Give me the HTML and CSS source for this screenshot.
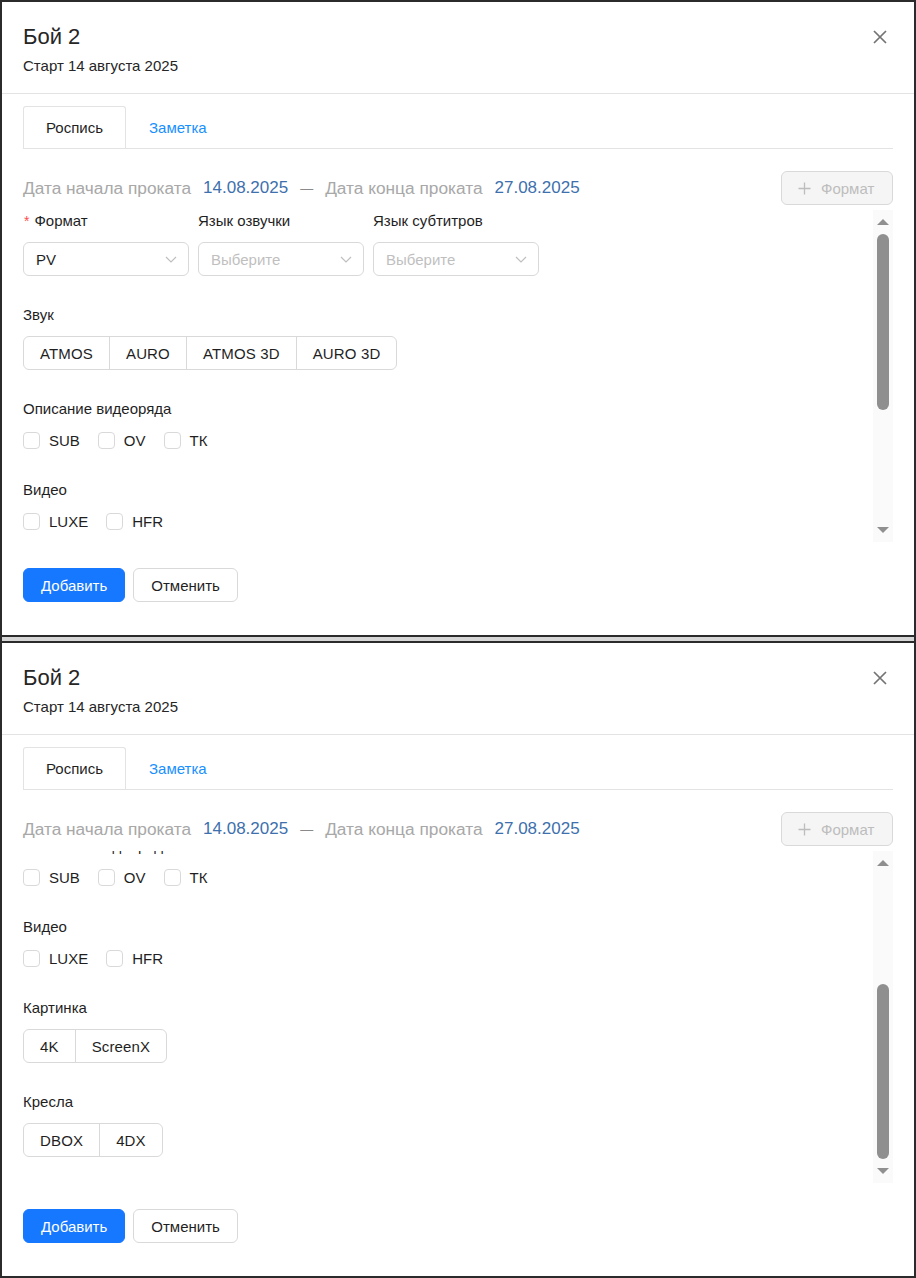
FILE: index.html
```html
<!DOCTYPE html>
<html lang="ru">
<head>
<meta charset="utf-8">
<title>Бой 2</title>
<link rel="stylesheet" href="styles.css">
</head>
<body>
<div class="screen">

  <section class="modal">
    <header class="modal-head">
      <div class="titles">
        <h1 class="title">Бой 2</h1>
        <p class="subtitle">Старт 14 августа 2025</p>
      </div>
      <button class="close" aria-label="Закрыть">
        <svg width="14" height="14" viewBox="0 0 14 14"><path d="M1 1L13 13M13 1L1 13" stroke="#737373" stroke-width="1.7" fill="none"/></svg>
      </button>
    </header>
    <div class="modal-body">
      <div class="tabs">
        <div class="tab active">Роспись</div>
        <div class="tab">Заметка</div>
      </div>
      <div class="dates">
        <span class="d-label">Дата начала проката</span>
        <span class="d-val">14.08.2025</span>
        <span class="dash">—</span>
        <span class="d-label">Дата конца проката</span>
        <span class="d-val">27.08.2025</span>
        <button class="add-format" disabled>
          <svg width="13" height="13" viewBox="0 0 13 13"><path d="M6.5 0.5V12.5M0.5 6.5H12.5" stroke="#bdbdbd" stroke-width="1.3" fill="none"/></svg>
          <span>Формат</span>
        </button>
      </div>
      <div class="scroll">
        <div class="viewport">
          <div class="content">
            <div class="selects">
              <div class="field">
                <div class="label"><span class="req">*</span>Формат</div>
                <div class="select"><span class="val">PV</span><svg class="chev" width="12" height="7" viewBox="0 0 12 7"><path d="M1 1L6 6L11 1" stroke="#bfbfbf" stroke-width="1.2" fill="none"/></svg></div>
              </div>
              <div class="field">
                <div class="label">Язык озвучки</div>
                <div class="select"><span class="ph">Выберите</span><svg class="chev" width="12" height="7" viewBox="0 0 12 7"><path d="M1 1L6 6L11 1" stroke="#bfbfbf" stroke-width="1.2" fill="none"/></svg></div>
              </div>
              <div class="field">
                <div class="label">Язык субтитров</div>
                <div class="select"><span class="ph">Выберите</span><svg class="chev" width="12" height="7" viewBox="0 0 12 7"><path d="M1 1L6 6L11 1" stroke="#bfbfbf" stroke-width="1.2" fill="none"/></svg></div>
              </div>
            </div>
            <div class="item">
              <div class="label">Звук</div>
              <div class="group"><span class="gbtn">ATMOS</span><span class="gbtn">AURO</span><span class="gbtn">ATMOS 3D</span><span class="gbtn">AURO 3D</span></div>
            </div>
            <div class="item">
              <div class="label">Описание видеоряда</div>
              <div class="checks"><label class="check"><span class="box"></span>SUB</label><label class="check"><span class="box"></span>OV</label><label class="check"><span class="box"></span>ТК</label></div>
            </div>
            <div class="item">
              <div class="label">Видео</div>
              <div class="checks"><label class="check"><span class="box"></span>LUXE</label><label class="check"><span class="box"></span>HFR</label></div>
            </div>
          </div>
        </div>
        <div class="scrollbar">
          <div class="sb-btn"><span class="tri up"></span></div>
          <div class="sb-track"><div class="thumb" style="margin-top:0px;height:176px"></div></div>
          <div class="sb-btn"><span class="tri down"></span></div>
        </div>
      </div>
      <div class="footer">
        <button class="btn primary">Добавить</button>
        <button class="btn">Отменить</button>
      </div>
    </div>
  </section>

  <div class="sep"></div>

  <section class="modal">
    <header class="modal-head">
      <div class="titles">
        <h1 class="title">Бой 2</h1>
        <p class="subtitle">Старт 14 августа 2025</p>
      </div>
      <button class="close" aria-label="Закрыть">
        <svg width="14" height="14" viewBox="0 0 14 14"><path d="M1 1L13 13M13 1L1 13" stroke="#737373" stroke-width="1.7" fill="none"/></svg>
      </button>
    </header>
    <div class="modal-body">
      <div class="tabs">
        <div class="tab active">Роспись</div>
        <div class="tab">Заметка</div>
      </div>
      <div class="dates">
        <span class="d-label">Дата начала проката</span>
        <span class="d-val">14.08.2025</span>
        <span class="dash">—</span>
        <span class="d-label">Дата конца проката</span>
        <span class="d-val">27.08.2025</span>
        <button class="add-format" disabled>
          <svg width="13" height="13" viewBox="0 0 13 13"><path d="M6.5 0.5V12.5M0.5 6.5H12.5" stroke="#bdbdbd" stroke-width="1.3" fill="none"/></svg>
          <span>Формат</span>
        </button>
      </div>
      <div class="scroll">
        <div class="viewport">
          <div class="content scrolled">
            <div class="item">
              <div class="label">Описание видеоряда</div>
              <div class="checks"><label class="check"><span class="box"></span>SUB</label><label class="check"><span class="box"></span>OV</label><label class="check"><span class="box"></span>ТК</label></div>
            </div>
            <div class="item">
              <div class="label">Видео</div>
              <div class="checks"><label class="check"><span class="box"></span>LUXE</label><label class="check"><span class="box"></span>HFR</label></div>
            </div>
            <div class="item">
              <div class="label">Картинка</div>
              <div class="group"><span class="gbtn">4K</span><span class="gbtn">ScreenX</span></div>
            </div>
            <div class="item">
              <div class="label">Кресла</div>
              <div class="group"><span class="gbtn">DBOX</span><span class="gbtn">4DX</span></div>
            </div>
          </div>
        </div>
        <div class="scrollbar">
          <div class="sb-btn"><span class="tri up"></span></div>
          <div class="sb-track"><div class="thumb" style="margin-top:109px;height:175px"></div></div>
          <div class="sb-btn"><span class="tri down"></span></div>
        </div>
      </div>
      <div class="footer">
        <button class="btn primary">Добавить</button>
        <button class="btn">Отменить</button>
      </div>
    </div>
  </section>

</div>
</body>
</html>
```
FILE: styles.css
```css
* { box-sizing: border-box; }
html, body { margin: 0; padding: 0; }
body {
  background: #2b2b2b;
  font-family: "Liberation Sans", Arial, sans-serif;
  font-size: 15px;
  color: #1f1f1f;
}
.screen {
  padding: 2px 2px 2px 2px;
  width: 916px;
}
.modal {
  background: #fff;
  height: 633px;
  width: 912px;
}
.sep {
  height: 8px;
  border-top: 2px solid #2b2b2b;
  border-bottom: 2px solid #2b2b2b;
  background: #d6d6d6;
}
.modal-head {
  display: flex;
  justify-content: space-between;
  align-items: flex-start;
  padding: 21px 21px 16px 21px;
  border-bottom: 1px solid #e3e3e3;
}
.title {
  margin: 0;
  font-size: 22px;
  font-weight: 400;
  line-height: 28px;
  color: #262626;
}
.subtitle {
  margin: 4px 0 0 0;
  font-size: 15px;
  line-height: 22px;
  color: #262626;
}
.close {
  width: 26px;
  height: 26px;
  margin-top: 1px;
  padding: 0;
  border: 0;
  background: transparent;
  display: flex;
  align-items: center;
  justify-content: center;
}
.modal-body {
  padding: 12px 21px 0 21px;
}
.tabs {
  display: flex;
  border-bottom: 1px solid #e3e3e3;
  height: 43px;
}
.tab {
  height: 42px;
  padding: 0 22px;
  display: flex;
  align-items: center;
  line-height: 22px;
  color: #1890ff;
  border: 1px solid transparent;
  border-bottom: 0;
}
.tab.active {
  color: #1f1f1f;
  border-color: #e3e3e3;
  border-radius: 3px 3px 0 0;
}
.dates {
  margin-top: 22px;
  height: 34px;
  display: flex;
  align-items: center;
  font-size: 17px;
}
.d-label { color: #a8a8a8; margin-right: 12px; font-size: 17.3px; }
.d-val { color: #3d70ad; margin-right: 12px; }
.dash { color: #8a8a8a; margin-right: 12px; font-size: 13px; }
.add-format {
  margin-left: auto;
  height: 34px;
  width: 112px;
  display: flex;
  align-items: center;
  gap: 10px;
  padding: 0 0 0 16px;
  background: #f5f5f5;
  border: 1px solid #d9d9d9;
  border-radius: 6px;
  color: #bdbdbd;
  font-family: inherit;
  font-size: 15px;
}
.scroll {
  margin-top: 5px;
  height: 332px;
  display: flex;
}
.viewport {
  flex: 1;
  overflow: hidden;
}
.content {
  padding-bottom: 26px;
}
.content.scrolled { margin-top: -44px; }
.label {
  line-height: 22px;
  margin-bottom: 10px;
  color: #1f1f1f;
}
.req {
  color: #ff4d4f;
  font-size: 14px;
  margin-left: 1px;
  margin-right: 5px;
}
.selects {
  display: grid;
  grid-template-columns: 166px 166px 166px;
  column-gap: 9px;
}
.select {
  height: 34px;
  border: 1px solid #d9d9d9;
  border-radius: 6px;
  display: flex;
  align-items: center;
  justify-content: space-between;
  padding: 0 11px 0 12px;
}
.val { color: #1f1f1f; }
.ph { color: #bfbfbf; }
.item { margin-top: 28px; }
.group {
  display: inline-flex;
  height: 34px;
  border: 1px solid #d9d9d9;
  border-radius: 6px;
}
.gbtn {
  display: flex;
  align-items: center;
  padding: 0 16px;
  color: #1f1f1f;
  letter-spacing: 0.15px;
}
.gbtn + .gbtn { border-left: 1px solid #d9d9d9; }
.checks {
  display: flex;
  height: 21px;
  align-items: center;
}
.check {
  display: flex;
  align-items: center;
  margin-right: 10px;
  padding-right: 8px;
}
.box {
  width: 17px;
  height: 17px;
  border: 1px solid #d9d9d9;
  border-radius: 4px;
  margin-right: 9px;
}
.scrollbar {
  width: 20px;
  background: #fafafa;
  display: flex;
  flex-direction: column;
  align-items: center;
}
.sb-btn {
  height: 24px;
  width: 20px;
  display: flex;
  align-items: center;
  justify-content: center;
}
.sb-track {
  flex: 1;
  width: 20px;
  display: flex;
  flex-direction: column;
  align-items: center;
}
.thumb {
  width: 12px;
  background: #8f8f8f;
  border-radius: 6px;
}
.tri {
  width: 0;
  height: 0;
  border-left: 6px solid transparent;
  border-right: 6px solid transparent;
}
.tri.up { border-bottom: 6px solid #8f8f8f; }
.tri.down { border-top: 6px solid #8f8f8f; }
.footer {
  margin-top: 26px;
  display: flex;
  gap: 8px;
}
.btn {
  height: 34px;
  padding: 0 17px;
  border: 1px solid #d9d9d9;
  border-radius: 6px;
  background: #fff;
  color: #1f1f1f;
  font-family: inherit;
  font-size: 15px;
}
.btn.primary {
  background: #1677ff;
  border-color: #1677ff;
  color: #fff;
}
```
